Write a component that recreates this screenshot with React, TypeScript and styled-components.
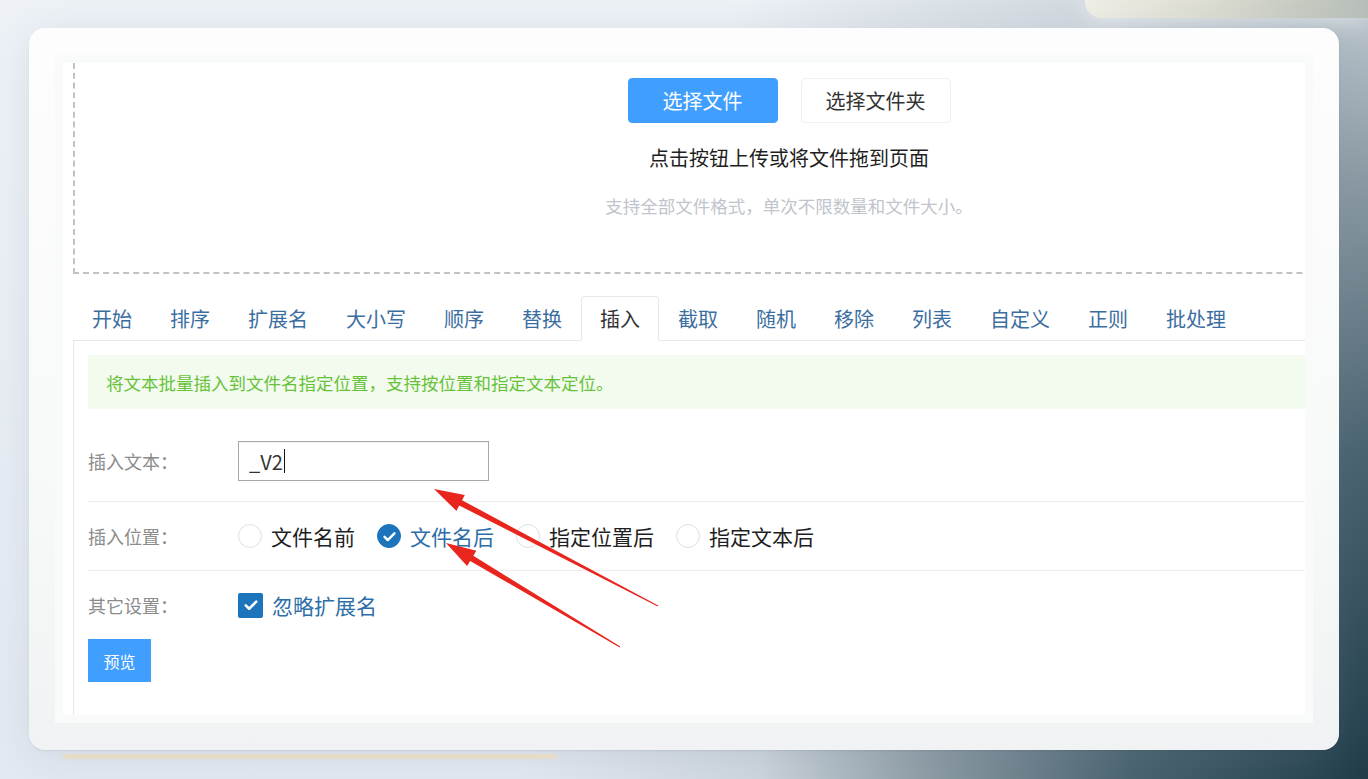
import styled, { createGlobalStyle } from "styled-components";

const GlobalStyle = createGlobalStyle`
  html, body {
    margin: 0;
    padding: 0;
    overflow: hidden;
  }
  body {
    font-family: "Noto Sans CJK SC", "Noto Sans", "Liberation Sans", sans-serif;
  }
`;

const Page = styled.div`
  position: relative;
  width: 1368px;
  height: 779px;
  overflow: hidden;
  display: flex;
  flex-direction: column;
  background:
    radial-gradient(ellipse 62% 150% at 100% 100%, #213d4a 0%, #4a6370 28%, #8d9ca5 52%, rgba(196, 205, 212, 0.7) 72%, rgba(230, 235, 241, 0) 100%),
    linear-gradient(180deg, #eef2f7 0%, #e3e9f1 100%);
`;

const TopDeco = styled.div`
  height: 18px;
  display: flex;
  justify-content: flex-end;
`;

const TopPill = styled.div`
  width: 283px;
  height: 100%;
  border-bottom-left-radius: 16px;
  background: linear-gradient(90deg, #f0efe7 0%, #dcdcd0 45%, #b7beb8 100%);
  box-shadow: 0 0 24px rgba(255, 255, 255, 0.7);
`;

const Card = styled.div`
  margin: 10px 0 0 29px;
  width: 1310px;
  height: 722px;
  box-sizing: border-box;
  padding: 27px 26px;
  border-radius: 16px;
  background: linear-gradient(180deg, #fdfdfd 0%, #f8f9f9 60%, #f1f2f3 100%);
  box-shadow: 0 6px 40px rgba(120, 140, 160, 0.18), 0 1px 2px rgba(0, 0, 0, 0.08);
`;

const Frame = styled.div`
  height: 100%;
  box-sizing: border-box;
  padding: 8px;
  background: #f9fafa;
`;

const Sheet = styled.div`
  height: 100%;
  box-sizing: border-box;
  padding-left: 10px;
  background: #ffffff;
  overflow: hidden;
  display: flex;
  flex-direction: column;
`;

const DropZone = styled.div`
  width: calc(100% + 198px);
  height: 211px;
  flex-shrink: 0;
  box-sizing: border-box;
  padding-top: 15px;
  border-left: 2px dashed #c2c2c2;
  border-bottom: 2px dashed #c2c2c2;
  display: flex;
  flex-direction: column;
  align-items: center;
`;

const ButtonRow = styled.div`
  display: flex;
  gap: 23px;
`;

const PickButton = styled.button<{ $primary?: boolean }>`
  width: 150px;
  height: 45px;
  border-radius: 4px;
  font-family: inherit;
  font-size: 20px;
  cursor: pointer;
  border: 1px solid ${(p) => (p.$primary ? "#409eff" : "#eef0f3")};
  background: ${(p) => (p.$primary ? "#409eff" : "#ffffff")};
  color: ${(p) => (p.$primary ? "#ffffff" : "#333333")};
`;

const DropTitle = styled.div`
  margin-top: 21px;
  font-size: 20px;
  line-height: 28px;
  color: #1f1f1f;
`;

const DropHint = styled.div`
  margin-top: 22px;
  font-size: 17.5px;
  line-height: 24px;
  color: #c0c4cc;
`;

const TabBar = styled.div`
  margin-top: 22px;
  display: flex;
  flex-shrink: 0;
  border-bottom: 1px solid #e4e7ed;
`;

const Tab = styled.div<{ $active?: boolean }>`
  height: 43px;
  padding: 0 18px;
  margin-bottom: -1px;
  display: flex;
  align-items: center;
  font-size: 20px;
  cursor: pointer;
  color: ${(p) => (p.$active ? "#333333" : "#3b6e9f")};
  border: 1px solid ${(p) => (p.$active ? "#e4e7ed" : "transparent")};
  border-bottom-color: ${(p) => (p.$active ? "#ffffff" : "transparent")};
  border-radius: 4px 4px 0 0;
  background: ${(p) => (p.$active ? "#ffffff" : "transparent")};
`;

const Panel = styled.div`
  flex: 1;
  box-sizing: border-box;
  padding: 14px 0 0 14px;
  border-left: 1px solid #e4e7ed;
`;

const Notice = styled.div`
  height: 54px;
  padding-left: 18px;
  display: flex;
  align-items: center;
  background: #f3fbee;
  color: #67c23a;
  font-size: 17.5px;
`;

const FormRow = styled.div<{ $height: number; $divider?: boolean; $top?: number }>`
  height: ${(p) => p.$height}px;
  margin-top: ${(p) => p.$top ?? 0}px;
  display: flex;
  align-items: center;
  border-bottom: ${(p) => (p.$divider ? "1px solid #ebedf0" : "none")};
`;

const Label = styled.div`
  width: 150px;
  flex-shrink: 0;
  font-size: 18px;
  color: #8c8c8c;
`;

const TextBox = styled.div`
  width: 251px;
  height: 40px;
  box-sizing: border-box;
  padding-left: 10px;
  display: flex;
  align-items: center;
  border: 1px solid #a8a8a8;
  box-shadow: inset 0 1px 1px rgba(0, 0, 0, 0.06);
  font-size: 20px;
  color: #333333;
`;

const Caret = styled.span`
  width: 1px;
  height: 24px;
  margin-left: 1px;
  background: #111111;
`;

const Options = styled.div`
  display: flex;
  align-items: center;
`;

const Option = styled.label`
  display: flex;
  align-items: center;
  gap: 9px;
  margin-right: 22px;
  cursor: pointer;
`;

const RadioDot = styled.span<{ $checked?: boolean }>`
  width: 24px;
  height: 24px;
  box-sizing: border-box;
  border-radius: 50%;
  display: flex;
  align-items: center;
  justify-content: center;
  border: 1px solid ${(p) => (p.$checked ? "#1c74bd" : "#dcdfe6")};
  background: ${(p) => (p.$checked ? "#1c74bd" : "#ffffff")};
`;

const CheckSquare = styled.span`
  width: 25px;
  height: 25px;
  border-radius: 2px;
  display: flex;
  align-items: center;
  justify-content: center;
  background: #1c74bd;
`;

const OptionText = styled.span<{ $checked?: boolean }>`
  font-size: 21px;
  color: ${(p) => (p.$checked ? "#2d6ea8" : "#1f1f1f")};
`;

const PreviewButton = styled.button`
  width: 63px;
  height: 43px;
  border: none;
  background: #409eff;
  color: #ffffff;
  font-family: inherit;
  font-size: 16px;
  cursor: pointer;
`;

const BottomBar = styled.div`
  margin: 4px 0 0 63px;
  width: 494px;
  height: 5px;
  background: #e5dbc6;
`;

const ArrowLayer = styled.svg`
  position: absolute;
  left: 0;
  top: 0;
  pointer-events: none;
`;

const tabs = ["开始", "排序", "扩展名", "大小写", "顺序", "替换", "插入", "截取", "随机", "移除", "列表", "自定义", "正则", "批处理"];

const positions = [
  { text: "文件名前", checked: false },
  { text: "文件名后", checked: true },
  { text: "指定位置后", checked: false },
  { text: "指定文本后", checked: false },
];

function Tick({ size = 16 }: { size?: number }) {
  return (
    <svg width={size} height={size} viewBox="0 0 24 24" fill="none">
      <path d="M5 12.5l4.5 4.5L19 7.5" stroke="#ffffff" strokeWidth="3.4" strokeLinecap="round" strokeLinejoin="round" />
    </svg>
  );
}

// arrow shape built from tail to tip: thin tail, thicker shaft, sharp head
function arrowPoints(tx: number, ty: number, px: number, py: number) {
  const len = Math.hypot(px - tx, py - ty);
  const dx = (px - tx) / len;
  const dy = (py - ty) / len;
  const nx = -dy;
  const ny = dx;
  const head = 30;
  const bx = px - dx * head;
  const by = py - dy * head;
  const pts = [
    [tx + nx * 0.5, ty + ny * 0.5],
    [bx + nx * 3, by + ny * 3],
    [bx + nx * 9, by + ny * 9],
    [px, py],
    [bx - nx * 9, by - ny * 9],
    [bx - nx * 3, by - ny * 3],
    [tx - nx * 0.5, ty - ny * 0.5],
  ];
  return pts.map((p) => p.map((v) => v.toFixed(1)).join(",")).join(" ");
}

export default function App() {
  return (
    <Page>
      <GlobalStyle />
      <TopDeco>
        <TopPill />
      </TopDeco>
      <Card>
        <Frame>
          <Sheet>
            <DropZone>
              <ButtonRow>
                <PickButton $primary>选择文件</PickButton>
                <PickButton>选择文件夹</PickButton>
              </ButtonRow>
              <DropTitle>点击按钮上传或将文件拖到页面</DropTitle>
              <DropHint>支持全部文件格式，单次不限数量和文件大小。</DropHint>
            </DropZone>

            <TabBar>
              {tabs.map((t) => (
                <Tab key={t} $active={t === "插入"}>
                  {t}
                </Tab>
              ))}
            </TabBar>

            <Panel>
              <Notice>将文本批量插入到文件名指定位置，支持按位置和指定文本定位。</Notice>

              <FormRow $height={80} $top={12} $divider>
                <Label>插入文本：</Label>
                <TextBox>
                  _V2
                  <Caret />
                </TextBox>
              </FormRow>

              <FormRow $height={68} $divider>
                <Label>插入位置：</Label>
                <Options>
                  {positions.map((o) => (
                    <Option key={o.text}>
                      <RadioDot $checked={o.checked}>{o.checked && <Tick size={17} />}</RadioDot>
                      <OptionText $checked={o.checked}>{o.text}</OptionText>
                    </Option>
                  ))}
                </Options>
              </FormRow>

              <FormRow $height={68}>
                <Label>其它设置：</Label>
                <Option>
                  <CheckSquare>
                    <Tick size={18} />
                  </CheckSquare>
                  <OptionText $checked>忽略扩展名</OptionText>
                </Option>
              </FormRow>

              <PreviewButton>预览</PreviewButton>
            </Panel>
          </Sheet>
        </Frame>
      </Card>
      <BottomBar />

      <ArrowLayer width="1368" height="779" viewBox="0 0 1368 779">
        <polygon points={arrowPoints(658, 606, 434, 489)} fill="#e8261e" />
        <polygon points={arrowPoints(620, 647, 446, 543)} fill="#e8261e" />
      </ArrowLayer>
    </Page>
  );
}
